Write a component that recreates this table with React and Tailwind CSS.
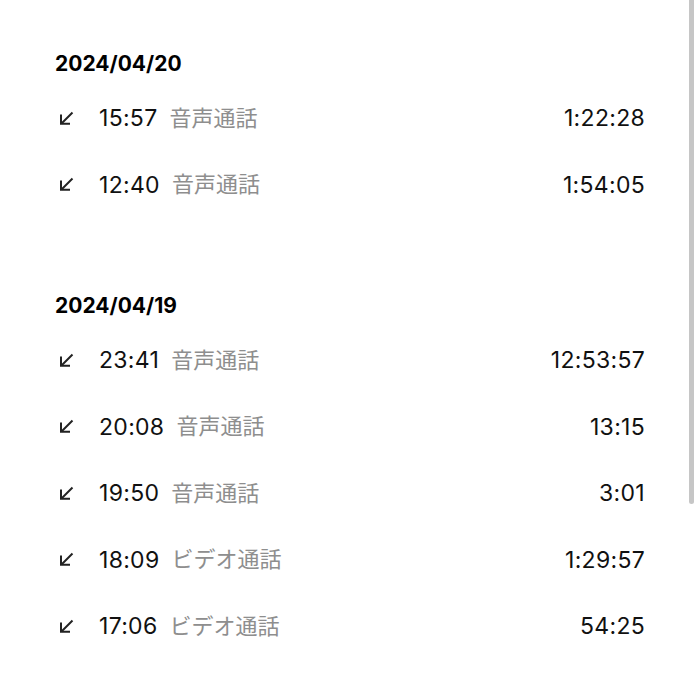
import React from 'react';

const sections = [
  {
    date: '2024/04/20',
    calls: [
      { time: '15:57', type: '音声通話', duration: '1:22:28' },
      { time: '12:40', type: '音声通話', duration: '1:54:05' },
    ],
  },
  {
    date: '2024/04/19',
    calls: [
      { time: '23:41', type: '音声通話', duration: '12:53:57' },
      { time: '20:08', type: '音声通話', duration: '13:15' },
      { time: '19:50', type: '音声通話', duration: '3:01' },
      { time: '18:09', type: 'ビデオ通話', duration: '1:29:57' },
      { time: '17:06', type: 'ビデオ通話', duration: '54:25' },
    ],
  },
];

const IncomingIcon = () => (
  <svg width="15" height="15" viewBox="0 0 15 15" fill="none" stroke="#222" strokeWidth="2">
    <path d="M13.5 1.5 L2.5 12.5" />
    <path d="M2 3.5 V12.8 H11" />
  </svg>
);

const CallRow = ({ call }) => (
  <div className="flex items-center h-[66.5px]">
    <div className="w-[44px] flex items-center pl-[4px]">
      <IncomingIcon />
    </div>
    <span className="text-[23px] text-[#111] tracking-[0.3px]">{call.time}</span>
    <span className="ml-[12px] text-[22px] text-[#8e8e8e]">{call.type}</span>
    <span className="ml-auto text-[23px] text-[#111] tracking-[0.3px]">{call.duration}</span>
  </div>
);

export default function App() {
  return (
    <div
      className="relative w-[700px] h-[700px] bg-white overflow-hidden"
      style={{ fontFamily: 'Inter, "Noto Sans CJK JP", sans-serif' }}
    >
      <div className="pl-[55px] pr-[55px] pt-[42px] flex flex-col gap-[66px]">
        {sections.map((s) => (
          <div key={s.date}>
            <div className="h-[43px] flex items-center text-[21px] font-bold text-black">
              {s.date}
            </div>
            {s.calls.map((c) => (
              <CallRow key={c.time} call={c} />
            ))}
          </div>
        ))}
      </div>

      {/* scrollbar */}
      <div className="absolute top-0 left-[689px] w-[5px] h-[504px] bg-[#c6c6c6] rounded-b-sm" />
    </div>
  );
}
